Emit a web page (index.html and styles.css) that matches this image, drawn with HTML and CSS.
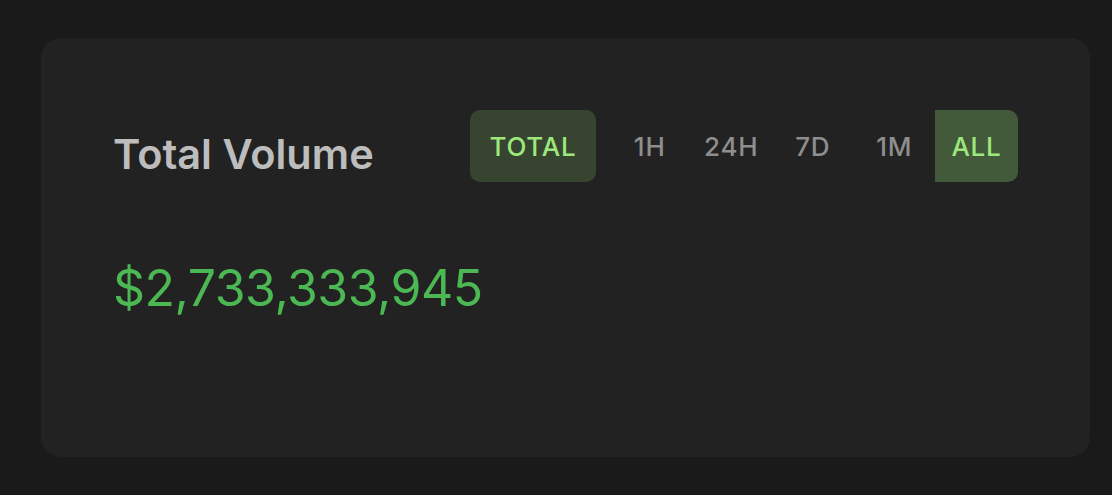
FILE: index.html
```html
<!DOCTYPE html>
<html>
<head>
<meta charset="utf-8">
<link rel="stylesheet" href="styles.css">
</head>
<body>
<div class="page">
  <section class="card">
    <div class="card-head">
      <h2 class="title">Total Volume</h2>
      <div class="controls">
        <button class="pill pill-total">TOTAL</button>
        <div class="segments">
          <button class="seg">1H</button>
          <button class="seg">24H</button>
          <button class="seg">7D</button>
          <button class="seg">1M</button>
          <button class="seg seg-active">ALL</button>
        </div>
      </div>
    </div>
    <div class="value">$2,733,333,945</div>
  </section>
</div>
</body>
</html>
```
FILE: styles.css
```css
* { box-sizing: border-box; }
html, body { margin: 0; padding: 0; }
body {
  background: #1a1a1a;
  font-family: Inter, "Noto Sans", sans-serif;
  width: 1112px;
  height: 495px;
  overflow: hidden;
}
.page {
  padding: 38px 22px 38px 41px;
}
.card {
  width: 1049px;
  height: 419px;
  background: #222222;
  border-radius: 20px;
  padding: 72px 72px 0 72px;
}
.card-head {
  display: flex;
  align-items: center;
  justify-content: space-between;
  height: 72px;
}
.title {
  margin: 0;
  font-size: 41.5px;
  font-weight: 600;
  color: #bdbdbd;
  letter-spacing: 0;
  padding-top: 16px;
}
.controls {
  display: flex;
  align-items: center;
  gap: 13px;
  height: 72px;
}
button {
  font-family: inherit;
  border: none;
  background: none;
  cursor: pointer;
  padding: 0;
}
.pill {
  height: 72px;
  border-radius: 10px;
  font-size: 26px;
  font-weight: 500;
  letter-spacing: 0.8px;
}
.pill-total {
  width: 126px;
  background: #374530;
  color: #9ee77c;
}
.segments {
  display: flex;
  height: 72px;
  border-radius: 0 10px 10px 0;
  overflow: hidden;
}
.seg {
  width: 81.5px;
  height: 72px;
  font-size: 26px;
  font-weight: 500;
  color: #8e8e8e;
  letter-spacing: 0.8px;
}
.seg-active {
  width: 83px;
  background: #425a3a;
  color: #9ee77c;
}
.value {
  margin-top: 76px;
  font-size: 50px;
  font-weight: 400;
  color: #4cb853;
  letter-spacing: -0.5px;
}
```
